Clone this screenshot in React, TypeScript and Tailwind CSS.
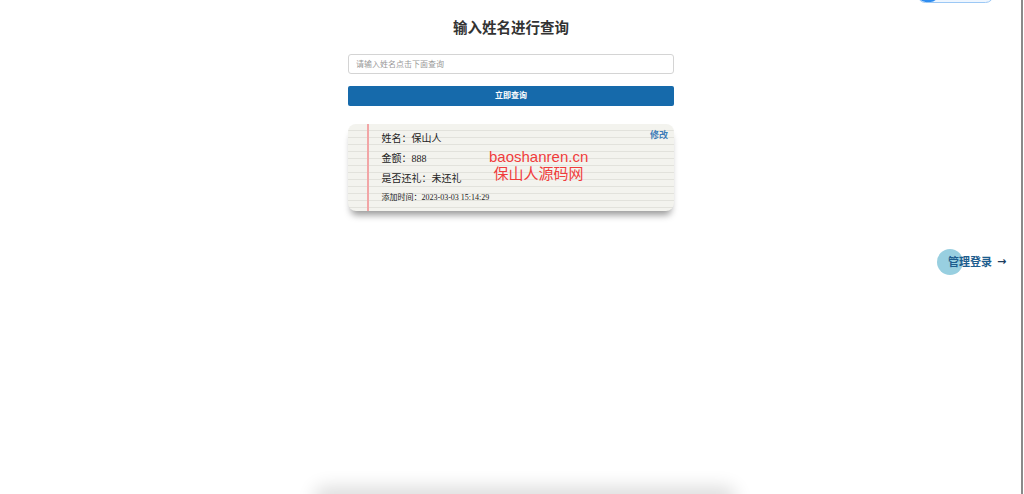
import React, { useState } from 'react';

const records = [
  { name: '保山人', amount: '888', returned: '未还礼', addedAt: '2023-03-03 15:14:29' },
];

export default function App() {
  const [keyword, setKeyword] = useState('');

  return (
    <div className="relative h-[494px] w-full overflow-hidden bg-white font-['Liberation_Sans','Noto_Sans_CJK_SC',sans-serif]">
      {/* top-right switch, cut off by the window */}
      <div className="absolute left-[917px] top-[-14px] flex h-[17px] w-[77px] overflow-hidden rounded-full border border-[#9cc8f5] bg-[#eef6ff]">
        <div className="h-full w-[20px] rounded-full bg-[#2f8df0]" />
      </div>

      <div className="ml-[348px] flex w-[326px] flex-col pt-[18px]">
        <h1 className="text-center text-[14.5px] font-bold leading-[20px] text-[#333]">输入姓名进行查询</h1>

        <input
          value={keyword}
          onChange={e => setKeyword(e.target.value)}
          placeholder="请输入姓名点击下面查询"
          className="mt-[16px] h-[20px] w-full rounded-[3px] border border-[#d4d4d4] px-[7px] text-[8px] text-[#555] outline-none placeholder:text-[#999]"
        />

        <button className="mt-[12px] h-[20px] w-full rounded-[2px] bg-[#166aab] text-[8px] font-bold text-white">
          立即查询
        </button>

        {/* Result cards */}
        {records.map(r => (
          <div
            key={r.name}
            className="relative mt-[18px] flex h-[87px] w-full rounded-[8px] bg-[#f3f3ee] bg-[repeating-linear-gradient(to_bottom,#f3f3ee_0px,#f3f3ee_6px,#e2e2dc_6px,#e2e2dc_7px)] shadow-[0_7px_7px_-3px_rgba(0,0,0,0.4)]"
          >
            <div className="ml-[19px] h-full w-[1.5px] shrink-0 bg-[#f2a6a6]" />
            <span className="absolute right-[6px] top-[5px] text-[9px] font-bold text-[#3d7cb8] font-['Liberation_Serif','Noto_Sans_CJK_SC',serif]">修改</span>

            <div className="flex flex-col pl-[13px] pt-[5px] text-[10px] text-[#222] font-['Liberation_Serif','Noto_Sans_CJK_SC',serif]">
              <div className="leading-[20px]">姓名：{r.name}</div>
              <div className="leading-[20px]">金额：{r.amount}</div>
              <div className="leading-[19px]">是否还礼：{r.returned}</div>
              <div className="mt-[1px] text-[8px] leading-[18px]">添加时间：{r.addedAt}</div>
            </div>

            {/* watermark */}
            <div className="absolute left-[141px] top-[24px] flex flex-col items-center text-[15px] leading-[17px] text-[#f03c3c]">
              <span>baoshanren.cn</span>
              <span>保山人源码网</span>
            </div>
          </div>
        ))}
      </div>

      {/* admin login */}
      <a className="absolute left-[937px] top-[249px] flex items-center">
        <span className="h-[26px] w-[26px] rounded-full bg-[#98cfe0]" />
        <span className="ml-[-15px] text-[11px] font-bold text-[#1d5d8e]">管理登录</span>
        <span className="ml-[5px] font-['DejaVu_Sans',sans-serif] text-[11px] font-bold text-[#1d3d5e]">→</span>
      </a>

      {/* shadow of something below the fold */}
      <div className="absolute left-[320px] top-[497px] h-[10px] w-[410px] rounded-full shadow-[0_-4px_18px_6px_rgba(0,0,0,0.14)]" />

      {/* window edge */}
      <div className="absolute right-[1px] top-0 h-full w-[2px] bg-[#8a8a8a]" />
    </div>
  );
}
